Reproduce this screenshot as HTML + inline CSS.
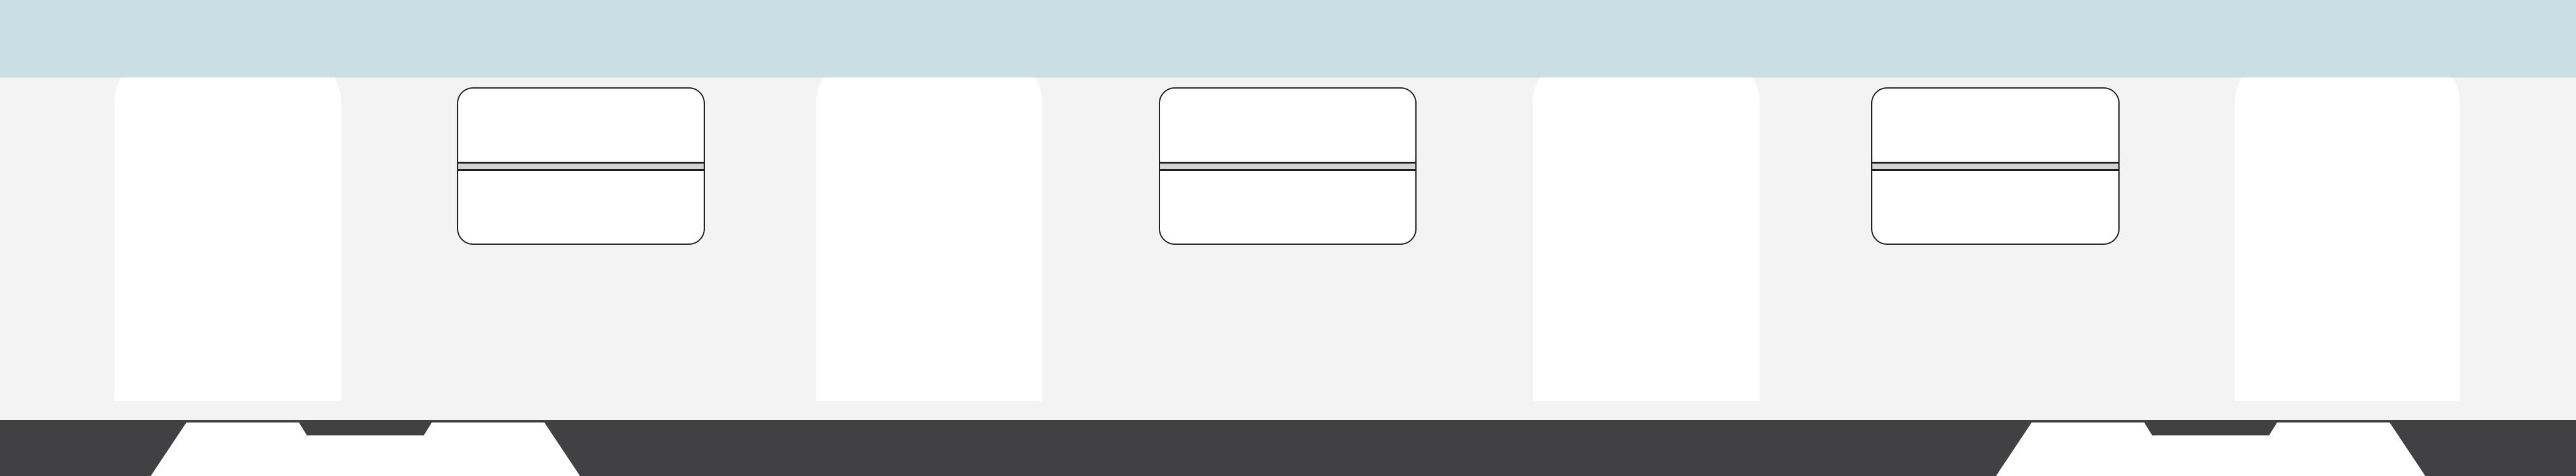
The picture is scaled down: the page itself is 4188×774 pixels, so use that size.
<!DOCTYPE html>
<html><head><meta charset="utf-8"><style>
html,body{margin:0;padding:0}
body{width:4188px;height:774px;position:relative;overflow:hidden;background:#f3f3f3}
.blue{position:absolute;left:0;top:0;width:4188px;height:126px;background:#cadfe3;z-index:2}
.door{position:absolute;top:112px;height:540px;background:#fff;border-radius:36px 36px 0 0/55px 55px 0 0}
.win{position:absolute;top:142px;height:252px;background:#fff;border:2px solid #231f20;border-radius:26px;box-sizing:content-box}
.stripe{position:absolute;left:0;right:0;top:119px;height:9px;background:#d1d3d4;border-top:3px solid #231f20;border-bottom:3px solid #231f20}
.dark{position:absolute;left:0;top:683px;width:4188px;height:91px;background:#414042}
svg{position:absolute;left:0;top:0}
</style></head><body>
<div class="door" style="left:186px;width:369px"></div>
<div class="door" style="left:1327px;width:367px"></div>
<div class="door" style="left:2492px;width:369px"></div>
<div class="door" style="left:3633px;width:366px"></div>
<div class="blue"></div>
<div class="win" style="left:743px;width:399px"><div class="stripe"></div></div>
<div class="win" style="left:1884px;width:415px"><div class="stripe"></div></div>
<div class="win" style="left:3042px;width:400px"><div class="stripe"></div></div>
<div class="dark"></div>
<svg width="4188" height="774" viewBox="0 0 4188 774">
<polygon fill="#fff" points="303,687 486,687 499,708 689,708 702,687 885,687 943,774 245,774"/>
<polygon fill="#fff" points="3303,687 3486,687 3499,708 3689,708 3702,687 3885,687 3943,774 3245,774"/>
</svg>
</body></html>
